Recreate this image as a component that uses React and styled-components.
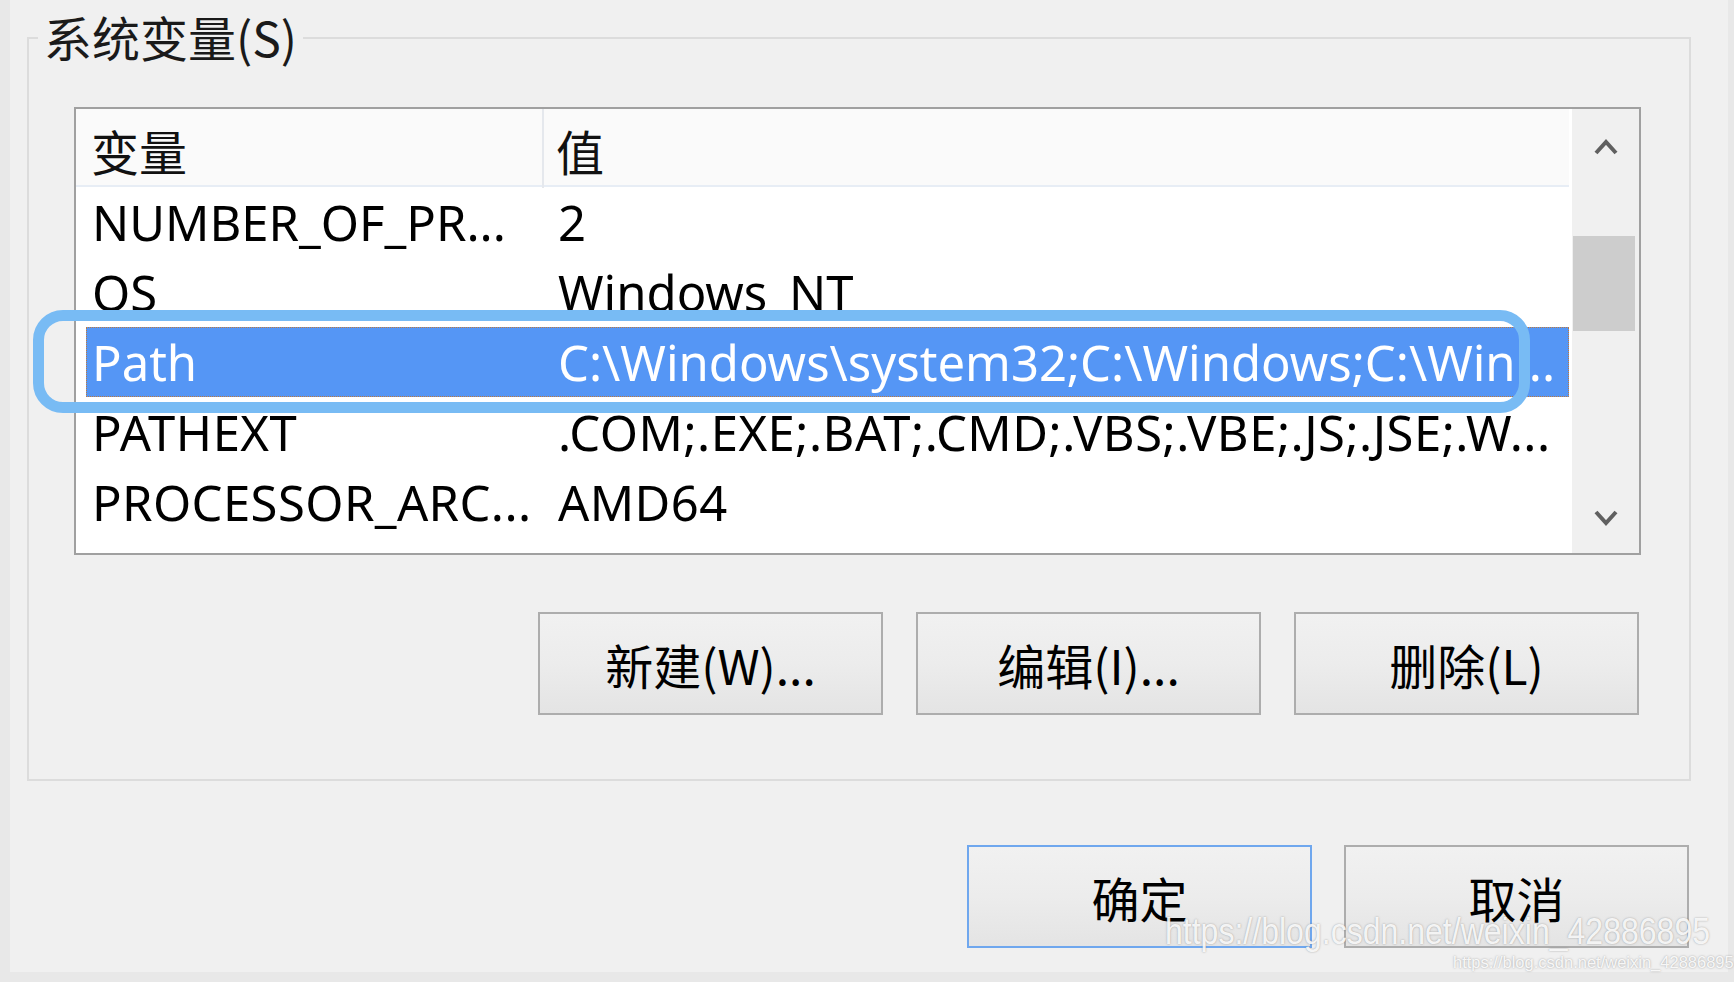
import React from "react";
import styled, { createGlobalStyle } from "styled-components";

const GlobalStyle = createGlobalStyle`
  body {
    margin: 0;
    background: #e8e8e8;
  }
`;

const CJK = `"Noto Sans CJK SC", "Noto Sans", sans-serif`;
const UI = `"Noto Sans", "Noto Sans CJK SC", sans-serif`;

const Frame = styled.div`
  position: relative;
  width: 1734px;
  height: 982px;
  background: #e8e8e8;
  overflow: hidden;
`;

const Window = styled.div`
  margin-left: 10px;
  width: 1718px;
  height: 972px;
  background: #f0f0f0;
  display: flex;
  flex-direction: column;
  align-items: flex-start;
`;

const GroupBox = styled.div`
  margin: 37px 0 0 17px;
  width: 1664px;
  height: 744px;
  border: 2px solid #dcdcdc;
  box-sizing: border-box;
  display: flex;
  flex-direction: column;
`;

const Legend = styled.div`
  align-self: flex-start;
  margin: -27px 0 0 9px;
  padding: 0 6px;
  height: 48px;
  background: #f0f0f0;
  font: 48px/48px ${CJK};
  color: #1a1a1a;
`;

/* list view with its scroll bar */
const ListBox = styled.div`
  margin: 47px 0 0 45px;
  width: 1567px;
  height: 448px;
  border: 2px solid #a0a0a0;
  box-sizing: border-box;
  background: #fff;
  display: flex;
`;

const List = styled.div`
  flex: 1;
  padding-right: 3px;
  display: flex;
  flex-direction: column;
  overflow: hidden;
`;

const Header = styled.div`
  height: 78px;
  display: grid;
  grid-template-columns: 468px 1fr;
  background: #fafafa;
  border-bottom: 2px solid #e7edf5;
  box-sizing: border-box;
`;

const HeaderCell = styled.div`
  padding-left: ${(p) => p.$pad}px;
  padding-top: 3px;
  font: 48px/76px ${CJK};
  color: #111;
  border-right: ${(p) => (p.$divider ? "2px solid #e5e8ed" : "none")};
`;

const Row = styled.div`
  height: 70px;
  margin-left: 10px;
  display: grid;
  grid-template-columns: 471px 1fr;
  box-sizing: border-box;
  border: 1px ${(p) => (p.$selected ? "dotted #c07a3c" : "solid transparent")};
  background: ${(p) => (p.$selected ? "#5596f5" : "transparent")};
  color: ${(p) => (p.$selected ? "#fff" : "#000")};
  font: 49px/68px ${UI};
  letter-spacing: ${(p) => p.$spacing || 0}px;
`;

const Cell = styled.div`
  padding-left: ${(p) => p.$pad || 0}px;
  white-space: nowrap;
  overflow: hidden;
`;

const Scrollbar = styled.div`
  width: 67px;
  background: #f0f0f0;
  display: flex;
  flex-direction: column;
`;

const ScrollButton = styled.div`
  height: ${(p) => p.$h}px;
  display: flex;
  align-items: center;
  justify-content: center;
`;

const Track = styled.div`
  flex: 1;
`;

const Thumb = styled.div`
  margin: 51px 4px 0 1px;
  height: 95px;
  background: #cdcdcd;
`;

const Chevron = ({ up }) => (
  <svg width="26" height="18" viewBox="0 0 26 18">
    <polyline
      points={up ? "3,15 13,4 23,15" : "3,3 13,14 23,3"}
      fill="none"
      stroke="#606060"
      strokeWidth="4"
    />
  </svg>
);

/* push buttons */
const ButtonRow = styled.div`
  align-self: flex-end;
  display: flex;
  gap: ${(p) => p.$gap}px;
  margin: ${(p) => p.$margin};
`;

const Button = styled.button`
  width: 345px;
  height: 103px;
  padding: 0;
  box-sizing: border-box;
  border: 2px solid ${(p) => (p.$primary ? "#6fa7ee" : "#adadad")};
  background: linear-gradient(to bottom, #f1f1f1 0%, #ececec 50%, #e4e4e4 100%);
  font: 48px/1 ${CJK};
  color: #000;
`;

/* annotation and watermarks drawn over the dialog */
const Highlight = styled.div`
  position: absolute;
  left: 33px;
  top: 310px;
  width: 1497px;
  height: 103px;
  box-sizing: border-box;
  border: 11px solid #78bbf4;
  border-radius: 30px;
  pointer-events: none;
`;

const Watermark = styled.div`
  position: absolute;
  left: ${(p) => p.$x}px;
  top: ${(p) => p.$y}px;
  font: ${(p) => p.$size}px/1 "Liberation Sans", Arial, sans-serif;
  color: rgba(255, 255, 255, 0.9);
  text-shadow: 0 0 2px rgba(90, 90, 90, 0.55);
  white-space: nowrap;
  transform: scaleX(${(p) => p.$sx});
  transform-origin: left top;
  pointer-events: none;
`;

const rows = [
  { name: "NUMBER_OF_PR...", value: "2" },
  { name: "OS", value: "Windows_NT" },
  { name: "Path", value: "C:\\Windows\\system32;C:\\Windows;C:\\Win...", selected: true },
  { name: "PATHEXT", value: ".COM;.EXE;.BAT;.CMD;.VBS;.VBE;.JS;.JSE;.W...", spacing: 0.5 },
  { name: "PROCESSOR_ARC...", value: "AMD64", spacing: 0.4 },
];

export default function App() {
  return (
    <Frame>
      <GlobalStyle />
      <Window>
        <GroupBox>
          <Legend>系统变量(S)</Legend>
          <ListBox>
            <List>
              <Header>
                <HeaderCell $pad={15} $divider>
                  变量
                </HeaderCell>
                <HeaderCell $pad={12}>值</HeaderCell>
              </Header>
              {rows.map((r) => (
                <Row key={r.name} $selected={r.selected} $spacing={r.spacing}>
                  <Cell $pad={5}>{r.name}</Cell>
                  <Cell>{r.value}</Cell>
                </Row>
              ))}
            </List>
            <Scrollbar>
              <ScrollButton $h={76}>
                <Chevron up />
              </ScrollButton>
              <Track>
                <Thumb />
              </Track>
              <ScrollButton $h={70}>
                <Chevron />
              </ScrollButton>
            </Scrollbar>
          </ListBox>
          <ButtonRow $gap={33} $margin="57px 50px 0 0">
            <Button>新建(W)...</Button>
            <Button>编辑(I)...</Button>
            <Button>删除(L)</Button>
          </ButtonRow>
        </GroupBox>
        <ButtonRow $gap={32} $margin="64px 39px 0 0">
          <Button $primary>确定</Button>
          <Button>取消</Button>
        </ButtonRow>
      </Window>
      <Highlight />
      <Watermark $x={1165} $y={914} $size={36} $sx={0.89}>
        https://blog.csdn.net/weixin_42886895
      </Watermark>
      <Watermark $x={1453} $y={954} $size={16.5} $sx={1}>
        https://blog.csdn.net/weixin_42886895
      </Watermark>
    </Frame>
  );
}
